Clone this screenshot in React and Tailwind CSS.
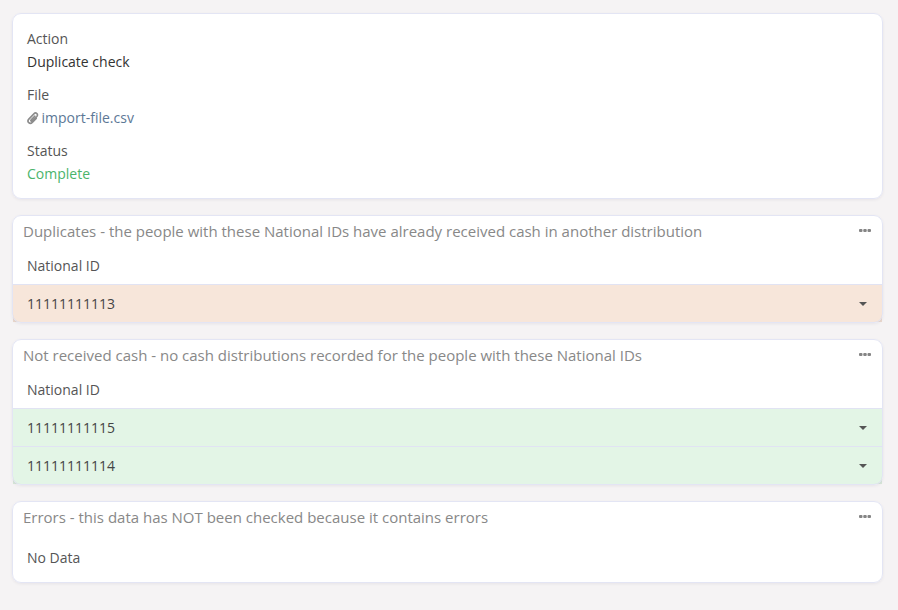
import React from "react";

function Card({ className = "", children }) {
  return (
    <section className={`relative rounded-[9px] bg-white p-px ${className}`}>
      {children}
      <div className="pointer-events-none absolute inset-0 rounded-[9px] border border-[#e3e5f4] shadow-[0_1px_3px_rgba(60,50,90,0.08)]" />
    </section>
  );
}

function Field({ label, children }) {
  return (
    <div className="h-14">
      <div className="h-[23px] leading-[23px] text-[#555]">{label}</div>
      <div className="flex h-[23px] items-center leading-[23px]">{children}</div>
    </div>
  );
}

function Paperclip() {
  return (
    <svg className="mt-px mr-[2.5px] shrink-0" width="12" height="14" viewBox="0 0 12 14" fill="none" stroke="#8c8c8c" strokeWidth="1.65" strokeLinecap="round" strokeLinejoin="round">
      <path d="M7.7 5.2 4.2 8.9c-.8.8.4 2 1.2 1.2l4.4-4.6c2-2.2-.9-4.7-2.9-2.7L1.8 8.1c-2.3 2.5 1 5.7 3.5 3.3l3.9-4" />
    </svg>
  );
}

function Dots() {
  return (
    <svg className="mb-px" width="12" height="3" viewBox="0 0 12 3" fill="#858585">
      <rect x="0" y="0" width="3.5" height="3" rx="1" />
      <rect x="4.25" y="0" width="3.5" height="3" rx="1" />
      <rect x="8.5" y="0" width="3.5" height="3" rx="1" />
    </svg>
  );
}

function Title({ children }) {
  return (
    <div className="flex h-[30px] items-center justify-between pr-[11px] pl-2.5 text-[15px] leading-[30px] text-[#888]">
      <h2>{children}</h2>
      <Dots />
    </div>
  );
}

function Row({ id, tone }) {
  return (
    <div className={`flex h-[38px] items-center justify-between border-t border-[#e1e3f3] pr-[15px] pl-3.5 text-[#444] ${tone}`}>
      <span>{id}</span>
      <svg width="8" height="4" viewBox="0 0 8 4" fill="#555">
        <path d="M0 0h8L4 4z" />
      </svg>
    </div>
  );
}

function Listing({ title, ids, tone, className }) {
  return (
    <Card className={className}>
      <Title>{title}</Title>
      <div className="h-[38px] pl-3.5 leading-[39px] text-[#555]">National ID</div>
      {ids.map((id) => (
        <Row key={id} id={id} tone={tone} />
      ))}
      {/* Shades the square row corners that stick out past the card's rounding */}
      <div className="pointer-events-none absolute inset-x-px bottom-px h-5 overflow-hidden">
        <div className="h-full rounded-b-lg shadow-[0_0_0_8px_rgba(40,20,20,0.06)]" />
      </div>
    </Card>
  );
}

export default function App() {
  return (
    <main className="flex min-h-[610px] flex-col gap-4 bg-[#f5f3f4] pt-[13px] pr-[15px] pl-3 font-['Open_Sans',sans-serif] text-sm">
      <Card className="h-[186px]">
        <div className="pt-[13px] pl-3.5">
          <Field label="Action">
            <span className="text-[#333]">Duplicate check</span>
          </Field>
          <Field label="File">
            <Paperclip />
            <a className="text-[#5d7896]">import-file.csv</a>
          </Field>
          <Field label="Status">
            <span className="text-[#4bb46b]">Complete</span>
          </Field>
        </div>
      </Card>
      <Listing
        className="h-[108px]"
        title="Duplicates - the people with these National IDs have already received cash in another distribution"
        ids={["11111111113"]}
        tone="bg-[#f7e6da]"
      />
      <Listing
        className="h-[146px]"
        title="Not received cash - no cash distributions recorded for the people with these National IDs"
        ids={["11111111115", "11111111114"]}
        tone="bg-[#e3f5e6]"
      />
      <Card className="h-[82px]">
        <Title>Errors - this data has NOT been checked because it contains errors</Title>
        <div className="pl-3.5 leading-[51px] text-[#555]">No Data</div>
      </Card>
    </main>
  );
}
